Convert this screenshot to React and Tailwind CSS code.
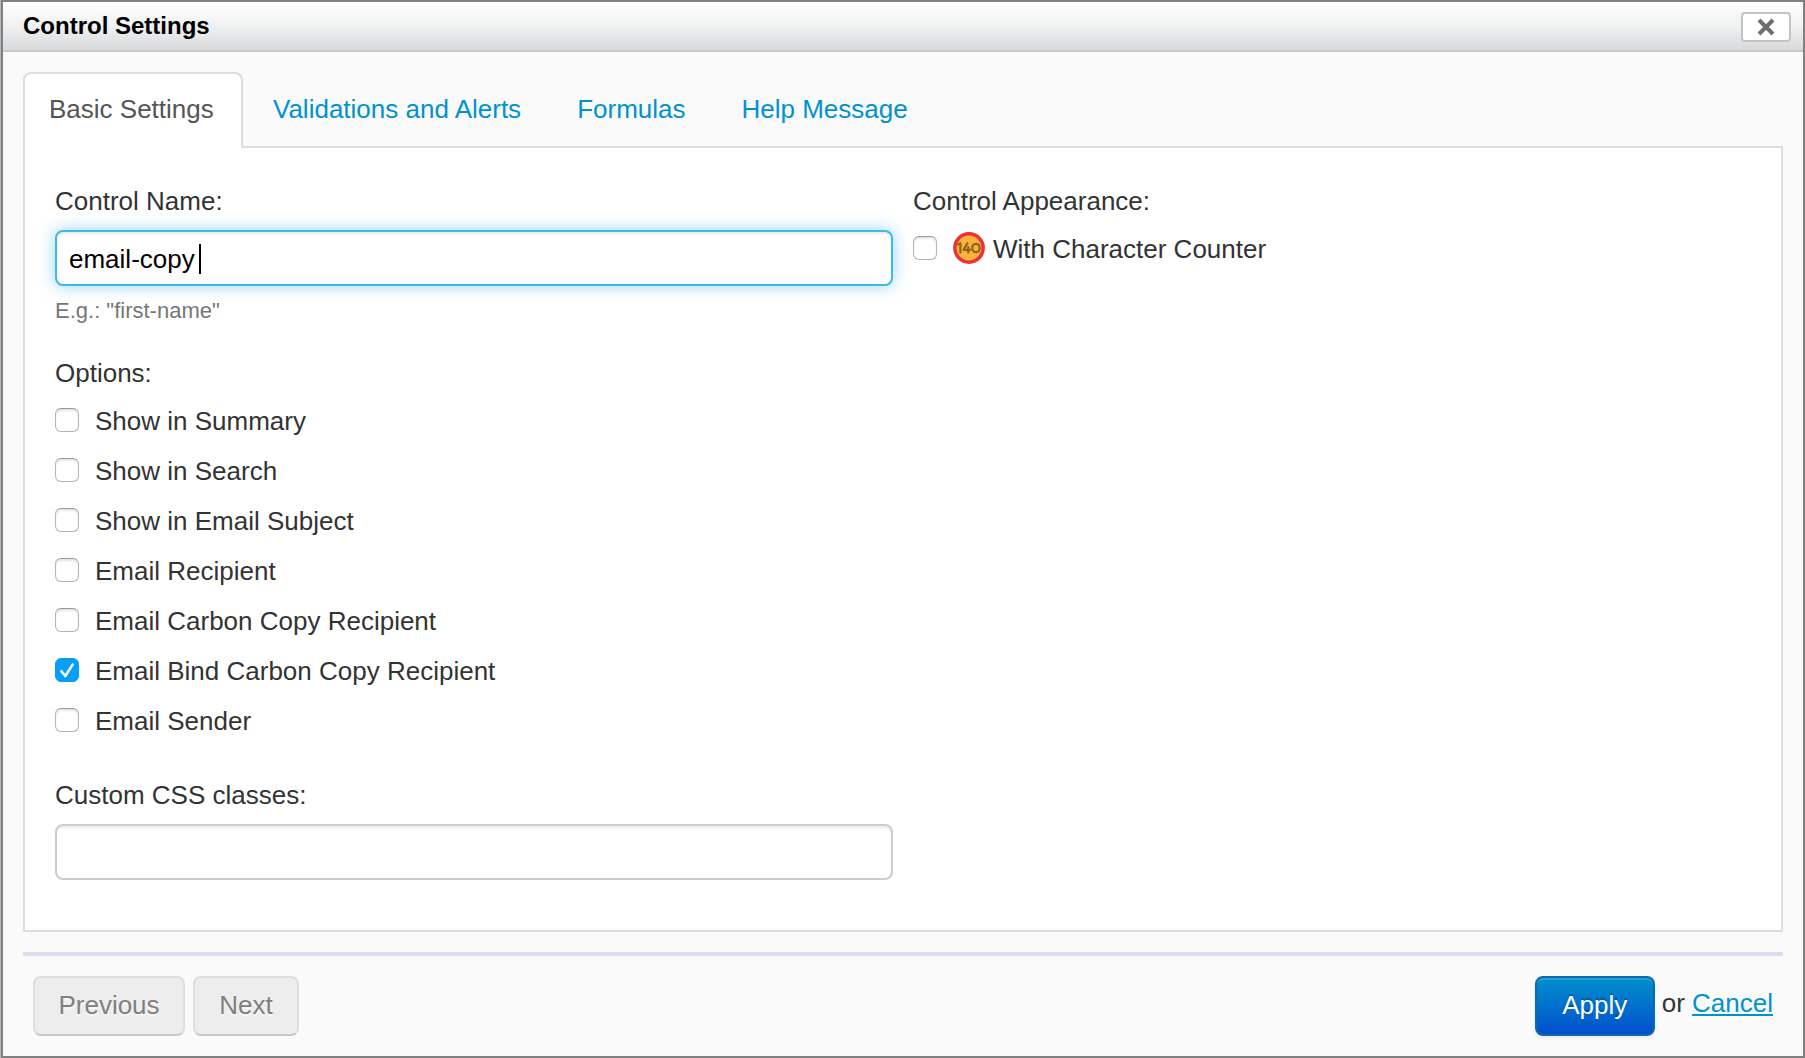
import { useState } from "react";

const TABS = ["Basic Settings", "Validations and Alerts", "Formulas", "Help Message"];

const OPTIONS = [
  "Show in Summary",
  "Show in Search",
  "Show in Email Subject",
  "Email Recipient",
  "Email Carbon Copy Recipient",
  "Email Bind Carbon Copy Recipient",
  "Email Sender",
];

function Checkbox({ id, checked, onChange }) {
  return (
    <span className="relative mt-[7px] flex size-6 shrink-0">
      <input
        id={id}
        type="checkbox"
        checked={checked}
        onChange={onChange}
        className="size-6 appearance-none rounded-md border border-[#b4b4b4] border-t-[#989898] bg-white shadow-[inset_0_2px_2px_rgba(0,0,0,0.1)] checked:border-[#069efb] checked:bg-[#069efb] checked:shadow-none"
      />
      {checked && (
        <svg viewBox="0 0 24 24" className="pointer-events-none absolute inset-0 size-6" fill="none" aria-hidden="true">
          <path d="M6.3 13.2 10.3 18 17.6 6.6" stroke="#fff" strokeWidth="2.6" strokeLinecap="round" strokeLinejoin="round" />
        </svg>
      )}
    </span>
  );
}

function CounterIcon() {
  return (
    <svg viewBox="0 0 32 32" className="size-8 shrink-0" aria-hidden="true">
      <circle cx="16" cy="16" r="14.2" fill="#fdb03a" stroke="#ec3236" strokeWidth="3.4" />
      <g fill="none" stroke="#8a6420" strokeWidth="2.2" strokeLinecap="round" strokeLinejoin="round">
        <path d="M5.2 12.4 7.4 11.2V20.6" />
        <path d="M14.4 11.2 10.6 17.8H17.2M15.2 15.2V20.6" />
        <ellipse cx="23" cy="16" rx="3.8" ry="4.2" />
      </g>
    </svg>
  );
}

function CloseIcon() {
  return (
    <svg viewBox="0 0 18 18" className="size-[18px]" aria-hidden="true">
      <path d="M2 2 16 16M16 2 2 16" stroke="#6e6e6e" strokeWidth="4" />
    </svg>
  );
}

export default function App() {
  const [tab, setTab] = useState(0);
  const [name, setName] = useState("email-copy");
  const [css, setCss] = useState("");
  const [counter, setCounter] = useState(false);
  const [picked, setPicked] = useState([5]);

  const toggle = (i) =>
    setPicked((p) => (p.includes(i) ? p.filter((n) => n !== i) : [...p, i]));

  return (
    <div className="min-h-screen border-l border-[#b8b8b8] bg-[#fafafa] font-['Helvetica_Neue','Liberation_Sans',Arial,sans-serif] text-[26px] leading-10 text-[#333]">
      <div role="dialog" aria-labelledby="dialog-title" className="flex min-h-screen flex-col border-2 border-[#808080]">
        <header className="flex h-[50px] items-center justify-between border-b-2 border-[#c8c8c8] bg-linear-to-b from-white via-[#f0f1f1] to-[#d8d9db] pr-3 pl-5">
          <h1 id="dialog-title" className="text-2xl leading-10 font-bold text-black">Control Settings</h1>
          <button
            type="button"
            aria-label="Close"
            className="mt-0.5 flex h-[30px] w-[50px] items-center justify-center rounded-sm border-2 border-[#c4c4c4] bg-white"
          >
            <CloseIcon />
          </button>
        </header>

        <main className="flex flex-1 flex-col px-5 pt-5">
          <div role="tablist" className="-mb-0.5 flex gap-1">
            {TABS.map((label, i) => (
              <button
                key={label}
                type="button"
                role="tab"
                aria-selected={tab === i}
                onClick={() => setTab(i)}
                className={
                  tab === i
                    ? "relative min-w-[220px] rounded-t-lg border-2 border-b-0 border-[#ddd] bg-white px-6 pt-[15px] pb-[19px] text-left text-[#555]"
                    : "rounded-t-lg border-2 border-b-0 border-transparent px-6 pt-[15px] pb-[19px] text-left text-[#0092cf]"
                }
              >
                {label}
              </button>
            ))}
          </div>

          <section role="tabpanel" className="grid flex-1 grid-cols-2 gap-5 border-2 border-[#ddd] bg-white px-[30px] pt-[33px] pb-12">
            <div className="flex flex-col">
              <label htmlFor="control-name" className="mb-[9px]">Control Name:</label>
              <div className="relative">
                <input
                  id="control-name"
                  type="text"
                  value={name}
                  onChange={(e) => setName(e.target.value)}
                  className="block h-14 w-full rounded-lg border-2 border-[#3cbaea] bg-white px-3 pt-0.5 text-black caret-transparent shadow-[inset_0_2px_2px_rgba(0,0,0,0.08),0_0_16px_rgba(82,184,236,0.6)] outline-none"
                />
                <span className="pointer-events-none absolute inset-y-0 left-3.5 flex items-center gap-1 pt-0.5" aria-hidden="true">
                  <span className="invisible">{name}</span>
                  <span className="h-[30px] w-0.5 bg-black" />
                </span>
              </div>
              <p className="mt-[5px] text-[22px] text-[#777]">E.g.: "first-name"</p>

              <fieldset className="mt-[22px]">
                <legend className="mb-2">Options:</legend>
                <div className="flex flex-col gap-2.5">
                  {OPTIONS.map((label, i) => (
                    <div key={label} className="flex items-start gap-4">
                      <Checkbox id={`option-${i}`} checked={picked.includes(i)} onChange={() => toggle(i)} />
                      <label htmlFor={`option-${i}`}>{label}</label>
                    </div>
                  ))}
                </div>
              </fieldset>

              <label htmlFor="css-classes" className="mt-[34px] mb-[9px]">Custom CSS classes:</label>
              <input
                id="css-classes"
                type="text"
                value={css}
                onChange={(e) => setCss(e.target.value)}
                className="block h-14 w-full rounded-lg border-2 border-[#ccc] bg-white px-3 text-black shadow-[inset_0_2px_2px_rgba(0,0,0,0.08)] outline-none"
              />
            </div>

            <fieldset>
              <legend className="mb-2">Control Appearance:</legend>
              <div className="flex items-start">
                <Checkbox id="counter" checked={counter} onChange={() => setCounter(!counter)} />
                <label htmlFor="counter" className="ml-4 flex items-start gap-2">
                  <span className="mt-[3px]">
                    <CounterIcon />
                  </span>
                  With Character Counter
                </label>
              </div>
            </fieldset>
          </section>

          <footer className="mt-5 flex items-center justify-between border-t-4 border-[#dddeed] px-2.5 py-5">
            <div className="flex gap-2">
              <button type="button" disabled className="h-[60px] w-[152px] rounded-lg border-2 border-[#dedede] border-b-[#c8c8c8] bg-[#ededed] pb-0.5 text-[#808080] text-shadow-[0_2px_2px_rgba(255,255,255,0.75)]">
                Previous
              </button>
              <button type="button" disabled className="h-[60px] w-[106px] rounded-lg border-2 border-[#dedede] border-b-[#c8c8c8] bg-[#ededed] pb-0.5 text-[#808080] text-shadow-[0_2px_2px_rgba(255,255,255,0.75)]">
                Next
              </button>
            </div>
            <div className="flex items-center gap-[7px]">
              <button type="button" className="h-[60px] w-[120px] rounded-lg border-2 border-[#0a6cae] bg-linear-to-b from-[#0090cc] to-[#004ccc] bg-origin-border pb-0.5 text-white shadow-[inset_0_2px_0_rgba(255,255,255,0.15),0_2px_4px_rgba(0,0,0,0.06)] text-shadow-[0_-2px_0_rgba(0,0,0,0.25)]">
                Apply
              </button>
              <span className="pb-1.5">
                or{" "}
                <a href="#cancel" className="text-[#0092cf] underline decoration-2 underline-offset-2">Cancel</a>
              </span>
            </div>
          </footer>
        </main>
      </div>
    </div>
  );
}
